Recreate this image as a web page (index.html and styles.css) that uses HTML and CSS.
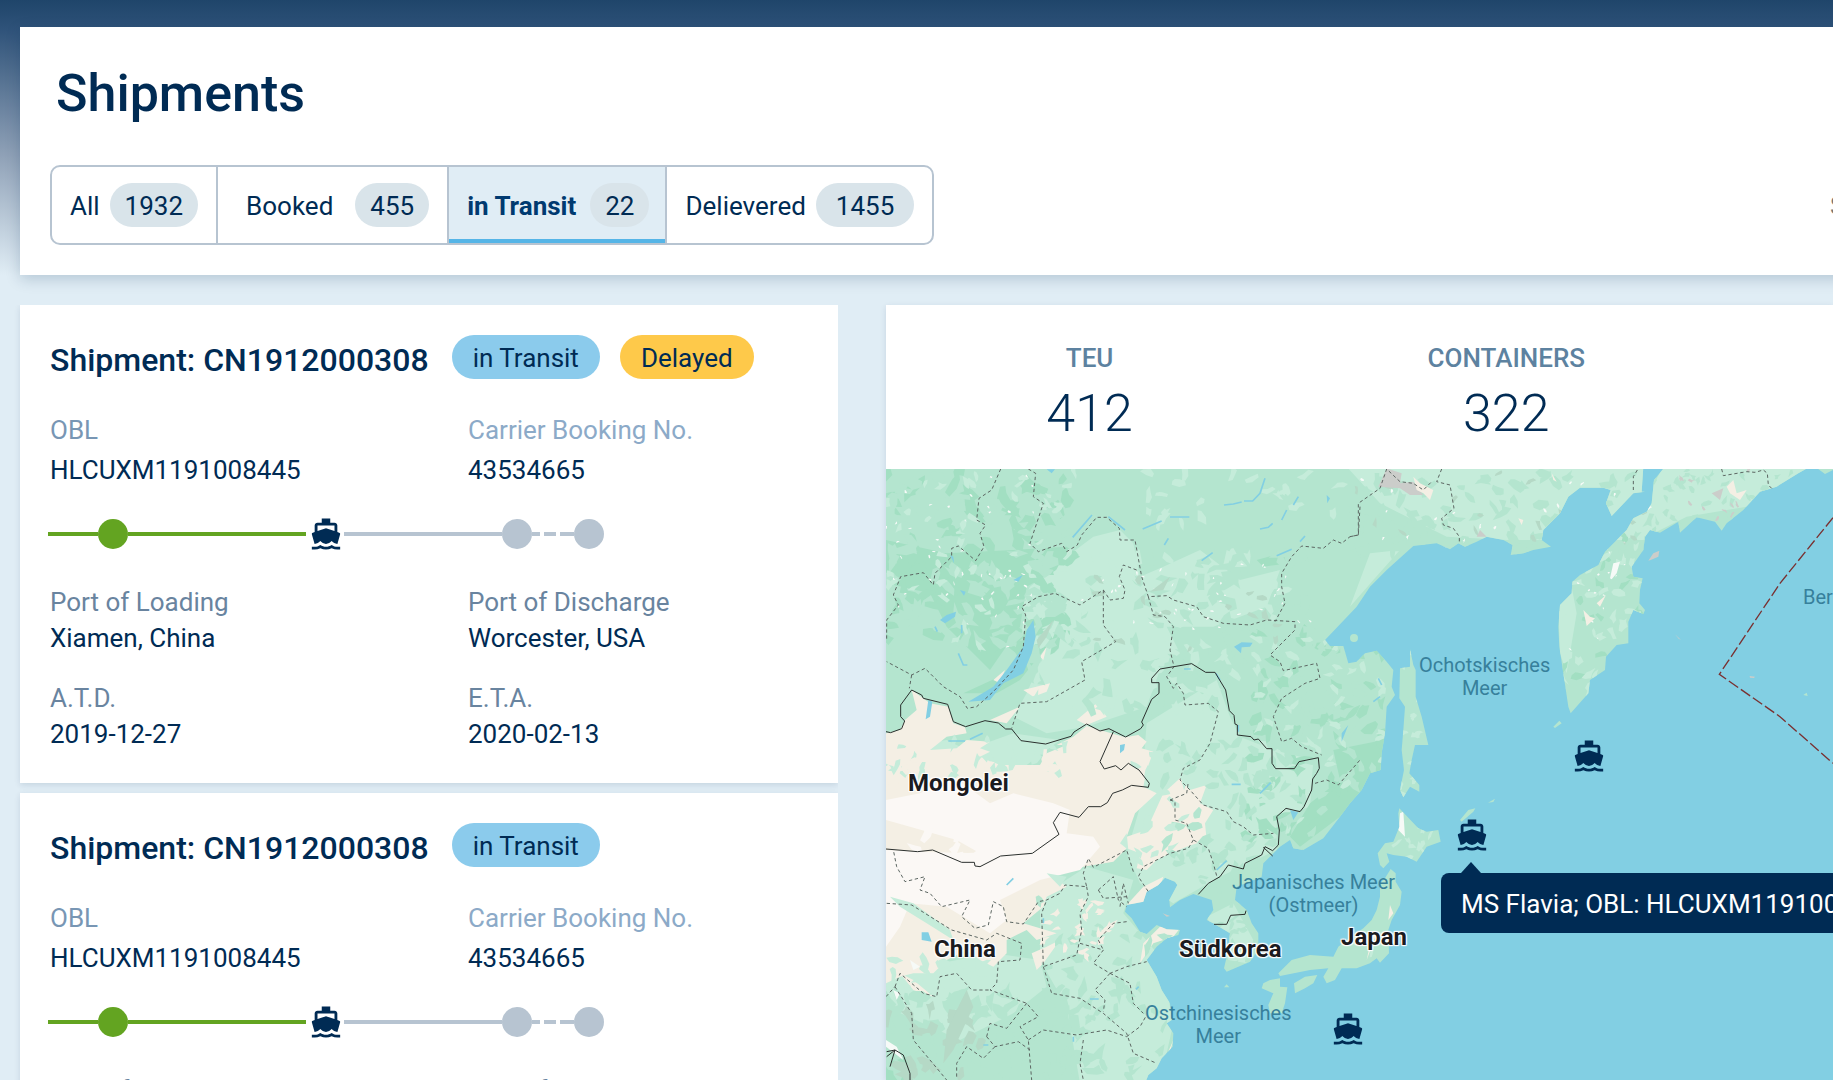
FILE: index.html
```html
<!DOCTYPE html>
<html lang="en">
<head>
<meta charset="utf-8">
<title>Shipments</title>
<link rel="stylesheet" href="styles.css">
</head>
<body>
<svg class="sprite" aria-hidden="true">
  <symbol id="ship" viewBox="0 0 24 24"><path d="M20 21c-1.39 0-2.78-.47-4-1.32-2.44 1.71-5.56 1.71-8 0C6.78 20.53 5.39 21 4 21H2v2h2c1.38 0 2.74-.35 4-.99 2.52 1.29 5.48 1.29 8 0 1.26.65 2.62.99 4 .99h2v-2h-2zM3.95 19H4c1.6 0 3.02-.88 4-2 .98 1.12 2.4 2 4 2s3.02-.88 4-2c.98 1.12 2.4 2 4 2h.05l1.89-6.68c.08-.26.06-.54-.06-.78s-.34-.42-.6-.5L20 10.62V6c0-1.1-.9-2-2-2h-3V1H9v3H6c-1.1 0-2 .9-2 2v4.62l-1.29.42c-.26.08-.48.26-.6.5s-.15.52-.06.78L3.95 19zM6 6h12v3.97L12 8 6 9.97V6z"/></symbol>
</svg>

<header class="masthead">
  <h1 class="masthead__title">Shipments</h1>
  <div class="masthead__bar">
    <nav class="tabs" aria-label="Shipment status">
      <button class="tab" type="button">All <span class="count">1932</span></button>
      <button class="tab tab--roomy" type="button">Booked <span class="count">455</span></button>
      <button class="tab tab--active" type="button" aria-pressed="true">in Transit <span class="count">22</span></button>
      <button class="tab" type="button">Delievered <span class="count count--wide">1455</span></button>
    </nav>
    <input class="search" type="search" placeholder="Search" aria-label="Search">
  </div>
</header>

<main class="board">
  <section class="list" aria-label="Shipments">
    <article class="card">
      <div class="card__head">
        <h2 class="card__title">Shipment: CN1912000308</h2>
        <span class="badge badge--transit">in Transit</span>
        <span class="badge badge--delayed">Delayed</span>
      </div>
      <dl class="facts facts--refs">
        <div><dt>OBL</dt><dd>HLCUXM1191008445</dd></div>
        <div><dt class="pale">Carrier Booking No.</dt><dd>43534665</dd></div>
      </dl>
      <div class="route">
        <span class="leg leg--first leg--done"></span><span class="stop stop--done"></span><span class="leg leg--sailed leg--done"></span>
        <svg class="ship route__ship" aria-hidden="true"><use href="#ship"/></svg>
        <span class="leg leg--ahead"></span><span class="stop"></span><span class="leg leg--inland"></span><span class="stop"></span>
      </div>
      <dl class="facts facts--ports">
        <div><dt>Port of Loading</dt><dd>Xiamen, China</dd></div>
        <div><dt>Port of Discharge</dt><dd>Worcester, USA</dd></div>
        <div><dt>A.T.D.</dt><dd>2019-12-27</dd></div>
        <div><dt>E.T.A.</dt><dd>2020-02-13</dd></div>
      </dl>
    </article>
    <article class="card">
      <div class="card__head">
        <h2 class="card__title">Shipment: CN1912000308</h2>
        <span class="badge badge--transit">in Transit</span>
      </div>
      <dl class="facts facts--refs">
        <div><dt>OBL</dt><dd>HLCUXM1191008445</dd></div>
        <div><dt class="pale">Carrier Booking No.</dt><dd>43534665</dd></div>
      </dl>
      <div class="route">
        <span class="leg leg--first leg--done"></span><span class="stop stop--done"></span><span class="leg leg--sailed leg--done"></span>
        <svg class="ship route__ship" aria-hidden="true"><use href="#ship"/></svg>
        <span class="leg leg--ahead"></span><span class="stop"></span><span class="leg leg--inland"></span><span class="stop"></span>
      </div>
      <dl class="facts facts--ports">
        <div><dt>Port of Loading</dt><dd>Xiamen, China</dd></div>
        <div><dt>Port of Discharge</dt><dd>Worcester, USA</dd></div>
        <div><dt>A.T.D.</dt><dd>2019-12-27</dd></div>
        <div><dt>E.T.A.</dt><dd>2020-02-13</dd></div>
      </dl>
    </article>
  </section>

  <section class="overview" aria-label="Fleet overview">
    <dl class="totals">
      <div><dt>TEU</dt><dd>412</dd></div>
      <div><dt>CONTAINERS</dt><dd>322</dd></div>
    </dl>
    <div class="map">
      <svg class="map__chart" viewBox="18 87 2841 1833" preserveAspectRatio="xMinYMin slice" aria-hidden="true">
        <defs>
          <g id="land">
            <path id="asia" d="M10 80H2290L2285 155 2295 155 2260 160 2195 228 2178 190 2192 150 2170 143 2100 143 2065 170 2040 220 1990 270 1985 300 2013 320 1960 330 1930 340 1892 345 1898 315 1870 300 1820 290 1790 305 1755 320 1735 310 1710 328 1670 310 1600 318 1570 345 1520 390 1470 440 1430 500 1335 600 1350 618 1390 618 1405 670 1430 665 1455 640 1490 632 1520 665 1540 690 1535 740 1545 765 1520 800 1515 880 1505 940 1502 990 1470 1000 1445 1050 1410 1090 1380 1130 1330 1195 1270 1230 1240 1225 1230 1200 1200 1220 1150 1270 1145 1310 1070 1340 1065 1380 1100 1410 1115 1450 1135 1480 1135 1530 1110 1565 1040 1595 1032 1585 1045 1530 1050 1480 1000 1450 980 1440 1000 1410 995 1380 940 1362 900 1380 870 1402 868 1380 892 1335 885 1325 855 1313 835 1335 800 1355 790 1385 740 1395 735 1415 755 1435 780 1475 800 1482 830 1455 860 1468 900 1470 895 1485 860 1495 830 1520 800 1560 830 1610 845 1650 870 1690 875 1740 860 1750 880 1780 878 1820 845 1855 830 1885 805 1905 795 1930H10Z"/>
            <path d="M2355 80H2790L2755 100 2690 140 2640 155 2590 210 2540 250 2525 272 2505 245 2450 232 2400 278 2395 245 2340 278 2310 270 2295 290 2290 330 2255 380 2260 410 2288 415 2280 450 2278 490 2295 510 2290 522 2260 510 2245 545 2245 610 2210 615 2178 650 2175 690 2130 720 2125 760 2072 820 2065 800 2050 700 2038 620 2035 560 2040 495 2075 460 2077 425 2100 405 2155 375 2175 335 2240 270 2260 235 2300 215 2315 190 2322 120Z"/>
            <path d="M1590 627 1600 675 1607 690 1607 770 1625 830 1645 915 1605 915 1595 960 1588 1000 1618 1035 1618 1055 1590 1040 1570 1072 1560 1050 1572 990 1565 930 1570 870 1575 800 1558 775 1560 685 1590 680Z"/>
            <path d="M1558 1105 1615 1165 1640 1175 1675 1170 1682 1205 1640 1220 1610 1265 1580 1250 1540 1245 1520 1240 1528 1265 1510 1285 1500 1275 1493 1240 1515 1210 1540 1205 1558 1160 1555 1120Z"/>
            <path d="M1532 1287 1547 1300 1547 1325 1565 1355 1560 1395 1535 1440 1525 1470 1527 1540 1500 1568 1490 1555 1470 1570 1430 1585 1385 1585 1365 1620 1340 1630 1330 1610 1345 1585 1290 1590 1200 1608 1195 1600 1235 1560 1290 1545 1360 1550 1375 1520 1400 1500 1450 1465 1475 1440 1490 1410 1500 1370 1500 1330 1515 1315Z"/>
            <path d="M1312 1605 1300 1630 1275 1645 1245 1660 1242 1630 1275 1610ZM1170 1620 1200 1615 1200 1640 1222 1642 1215 1690 1205 1720 1170 1720 1165 1695 1180 1660 1145 1645 1150 1630ZM1040 1633 1048 1642 1032 1642ZM1740 1140 1765 1110 1786 1105 1780 1115 1745 1145ZM1824 1088 1845 1076 1840 1086ZM2020 860 2038 842 2045 850 2025 864ZM2770 765 2780 758 2783 768ZM1410 594a12 12 0 1 0 24 0a12 12 0 1 0-24 0ZM2805 80H2859V90L2835 102Z"/>
          </g>
          <clipPath id="coast"><use href="#asia"/><path d="M2355 80H2790L2755 100 2690 140 2640 155 2590 210 2540 250 2525 272 2505 245 2450 232 2400 278 2395 245 2340 278 2310 270 2295 290 2290 330 2255 380 2260 410 2288 415 2280 450 2278 490 2295 510 2290 522 2260 510 2245 545 2245 610 2210 615 2178 650 2175 690 2130 720 2125 760 2072 820 2065 800 2050 700 2038 620 2035 560 2040 495 2075 460 2077 425 2100 405 2155 375 2175 335 2240 270 2260 235 2300 215 2315 190 2322 120ZM1590 627 1600 675 1607 690 1607 770 1625 830 1645 915 1605 915 1595 960 1588 1000 1618 1035 1618 1055 1590 1040 1570 1072 1560 1050 1572 990 1565 930 1570 870 1575 800 1558 775 1560 685 1590 680ZM1558 1105 1615 1165 1640 1175 1675 1170 1682 1205 1640 1220 1610 1265 1580 1250 1540 1245 1520 1240 1515 1210 1540 1205 1558 1160ZM1532 1287 1547 1300 1547 1325 1565 1355 1560 1395 1535 1440 1525 1470 1527 1540 1500 1568 1470 1570 1430 1585 1400 1500 1450 1465 1475 1440 1490 1410 1500 1370Z"/></clipPath>
        </defs>
        <path class="sea" d="M0 0H6000V4000H0Z"/>
        <use class="land" href="#land"/>
        <g clip-path="url(#coast)">
          <path class="meadow" d="M420 500 450 440 560 350 640 290 720 270 760 310 780 410 850 380 960 330 1080 420 1200 390 1160 500 1000 560 860 560 900 640 840 690 800 800 620 860 500 880 400 830 440 760 500 620Z"/>
          <path class="meadow" d="M1400 80H2300V300L1880 300 1700 290 1500 190ZM1470 340 1560 330 1480 420 1410 500ZM2350 80H2800L2600 200 2420 230 2300 290 2250 260ZM2035 500 2075 440 2090 520 2060 700 2040 640Z"/>
          <path class="meadow" d="M800 850 1010 720 1050 830 1080 890 1180 930 1300 960 1290 1100 1190 1130 1190 1230 1020 1310 880 1390 780 1330 740 1240 780 1100Z"/>
          <path class="meadow" d="M480 1370 620 1280 760 1320 730 1420 790 1490 840 1550 880 1750 840 1930H600L560 1700 480 1560ZM18 1600 340 1540 480 1560 500 1640 400 1720 240 1800 18 1700ZM980 1430 1060 1390 1120 1500 1100 1570 1045 1560ZM18 960 60 920 200 900 260 930 400 880 540 900 420 990 280 980 150 1010 40 980Z"/>
          <path class="forest" d="M18 300 200 340 400 330 560 320 600 350 440 440 420 560 330 690 200 560 150 460 18 430ZM1130 360 1240 330 1230 370 1150 380ZM1360 930 1510 900 1500 1000 1380 1130 1260 1220 1230 1190 1290 1090 1380 1020ZM250 760 380 700 430 620 480 540 500 620 420 720 350 760ZM18 1870 80 1850 100 1930H18Z"/>
          <path class="steppe" d="M18 880 60 870 75 840 110 810 95 750 150 790 205 800 220 850 255 862 260 880 200 890 150 930 230 925 260 900 330 905 300 925 330 935 300 950 360 975 480 975 500 940 560 915 530 915 580 890 620 858 660 870 735 892 775 885 800 905 785 925 820 935 800 990 790 1040 830 1060 765 1120 740 1190 800 1170 850 1060 900 1015 930 1050 980 1035 960 1090 1000 1110 975 1150 980 1200 920 1220 860 1245 830 1260 800 1290 770 1285 780 1240 740 1225 700 1265 610 1280 520 1310 560 1340 500 1370 490 1400 430 1450 530 1480 470 1500 440 1470 380 1500 380 1540 340 1580 300 1560 260 1530 200 1560 160 1600 100 1600 60 1610 18 1630ZM790 1340 850 1310 840 1340 800 1370 790 1390 740 1395Z"/>
          <path class="desert" d="M18 1080 120 1060 220 1010 330 1090 400 1060 520 1090 570 1110 560 1180 640 1190 660 1220 600 1290 480 1320 360 1380 380 1440 330 1480 200 1400 90 1390 60 1460 18 1520V1230L110 1235 300 1240 230 1200 90 1160 18 1140Z"/>
          <path class="steppe" d="M430 750 510 730 500 755 460 770ZM330 840 420 800 380 850ZM590 840 650 790 680 830 620 855ZM480 650 500 620 490 660ZM340 720 375 690 360 730ZM60 1600 100 1620 160 1670 100 1650ZM840 1460 900 1465 880 1490 820 1510 780 1570 790 1510ZM850 1870 880 1800 860 1870ZM455 1540 500 1520 540 1500 490 1570 470 1590Z"/>
          <path class="meadow" d="M30 1370 100 1390 210 1470 220 1500 140 1450 60 1400ZM500 1300 560 1310 540 1340ZM720 1210 740 1180 745 1230ZM600 1000 640 960 600 1000ZM1040 330 1060 340 1020 420Z"/>
          <g id="relief"></g>
          <path class="rock" d="M1495 140 1520 85 1565 100 1560 130 1600 125 1630 165 1590 165 1560 145ZM2495 160 2530 145 2520 180ZM1800 270 1820 290 1790 290Z"/>
          <path class="shade" d="M260 1650 280 1700 220 1830 190 1870 200 1770ZM470 600 520 540 500 590 475 625ZM810 455 870 410 850 450Z"/>
          <path class="steppe" d="M1600 110 1620 130 1660 150 1650 180 1630 160 1610 150ZM2540 140 2560 120 2570 160 2600 150 2580 180 2550 160ZM2150 490 2178 465 2160 500ZM2110 510 2130 530 2145 535 2120 558ZM2015 100 2030 125 2020 120ZM1915 235 1930 240 1925 255ZM1460 1560 1490 1480 1475 1490ZM1530 1395 1540 1420 1525 1440ZM1330 1580 1350 1570 1345 1600ZM1378 1550 1395 1560 1385 1580Z"/>
          <path class="snow" d="M2190 415 2200 370 2220 365 2210 400 2195 418ZM1560 1120 1570 1115 1575 1190 1555 1170ZM18 1800 50 1820 70 1860 18 1820ZM40 1650 60 1660 50 1680ZM90 1560 120 1580 100 1590Z"/>
          <path class="sea" d="M460 540 467 590 455 640 430 700 370 730 330 780 265 785 340 740 380 690 430 620 440 570ZM145 780 157 785 150 830 137 838ZM200 525 228 515 225 530 195 550 180 540ZM240 450 257 455 252 467ZM400 420 428 405 415 425ZM1062 620 1085 607 1118 608 1110 620 1085 622 1083 640ZM1340 165 1350 175 1342 190ZM720 915 735 912 732 930 720 940ZM1230 1110 1255 1117 1240 1140ZM125 1477 145 1477 155 1505 125 1500ZM210 345 220 350 222 370ZM1385 880 1405 855 1385 905ZM500 88 525 88 515 100Z"/>
          <path class="river" d="M578 292 636 225M685 230 735 270M870 231H928M1032 195 1060 192 1085 186M1092 183H1118L1140 160 1155 115M1255 170 1240 195M1220 210 1205 240M1140 267 1165 262 1178 250M1190 347 1235 328M1275 288 1260 305M788 267 845 243M865 295 853 315M965 362 998 338M205 903H255M270 898 308 880M245 555V580M235 640 250 675H262M380 1335 400 1315M1140 1060 1172 1028M1055 1033H1082M1010 1290 1040 1262M630 1677H656M490 1435V1450M165 560 172 575M1008 700 1020 720M1075 855V875M1480 785 1500 770M1495 715 1505 735M310 1815H325M580 1790V1805M768 1648 776 1640M912 687H932"/>
        </g>
        <path class="rock" d="M2305 362 2320 340 2338 332 2335 350 2312 360ZM2385 583 2403 600 2396 596ZM2609 708 2625 710 2622 714 2610 713ZM848 1420 870 1428 860 1430Z"/>
        <g class="province">
          <path d="M362 87 335 150 297 175 290 240 317 255 300 280 312 320 287 362 235 318 215 325V350L165 400 160 435 130 398 62 410 40 465 55 495 20 540V600"/>
          <path d="M445 87 467 100 460 170 490 190 450 310 475 335 545 310 560 335 592 315 605 285 650 232 680 232 718 265 720 300 765 300 785 410 805 470 860 467 880 480 950 500 970 530 1030 550 1110 555 1160 540 1245 545 1245 570 1170 645 1200 665 1210 692 1310 670 1320 715 1275 730 1205 775 1180 830 1205 905 1235 895 1265 920 1325 945"/>
          <path d="M805 470 820 525 855 530 880 560 870 630 882 680 860 710 880 745 890 730 910 760 915 795 985 790 1015 815 990 910 960 960 910 985 900 1020 930 1050 970 1095 1040 1115 1060 1145 1090 1160 1120 1185 1180 1180"/>
          <path d="M770 390 730 375 718 410 735 450 730 475 690 480 670 450 600 495 525 460 475 470 425 500 437 525 430 620 400 690 340 755 290 800 262 805 240 770 190 740 135 685 95 705 20 665M95 705 88 745M670 450V555L707 605 605 665 615 720 500 785 420 790 395 865"/>
          <path d="M1440 200 1435 285 1410 290 1385 310 1360 300 1330 325 1265 318 1235 350 1205 400 1205 440 1215 490 1185 545M1410 290 1435 285V190L1500 145 1520 87 1560 125 1600 130 1630 150 1655 125M1685 87 1670 125 1710 135 1722 205 1685 235 1690 255 1720 265 1738 290V310M2272 90 2260 110V150M2525 87 2530 107 2600 95 2625 97 2650 90 2662 100 2665 135 2675 145"/>
          <path d="M870 1080 885 1085V1140L920 1150 940 1200 985 1225 1000 1270 1012 1315M940 1200 925 1225 870 1240 790 1280 775 1310 805 1355M870 1080 920 1060 925 1025M1305 1030 1340 1020 1375 1035 1440 960M760 1295 740 1230 640 1282 625 1255 610 1300 620 1340 555 1335 540 1360 500 1380 475 1385 430 1452 380 1445 370 1400 340 1385 325 1455 285 1465 245 1430 270 1380 185 1400 150 1360 120 1350 135 1310 75 1325 50 1280 40 1230"/>
          <path d="M20 1390 95 1395 215 1470 320 1500 350 1480 425 1510 420 1560 355 1565 350 1630 330 1650 440 1690 475 1730 420 1760 445 1800 455 1920M620 1340 625 1370 600 1420 605 1470 590 1545 490 1580 485 1420 500 1380M490 1580 515 1660 600 1675 670 1720 740 1780 760 1840 830 1870M600 1510 670 1530 640 1570 690 1600 740 1580 800 1565M740 1445 700 1450 655 1500 670 1530M690 1600 645 1650 675 1680 670 1715M690 1600 750 1630 760 1690 790 1720"/>
          <path d="M45 1640 60 1600 130 1660 170 1670 180 1610 230 1600 275 1650 330 1650M45 1640 95 1720 100 1800 200 1920M320 1790 330 1750 380 1765 440 1690M445 1800 490 1770 590 1785 680 1770 740 1790M740 1790 780 1760 800 1725M610 1800 600 1870 610 1920M320 1790 345 1820 415 1805 450 1830M230 1910 230 1870 260 1820 310 1855 345 1820M18 1670 45 1640M655 1350 700 1310 715 1380 740 1400M720 1400 730 1330 745 1390M655 1350 670 1375 740 1370"/>
        </g>
        <g class="border">
          <path d="M18 875 32 878 65 866 74 843 62 830V795L95 750 125 765 130 775 203 793 220 845 257 860 315 842 355 849 377 867H395L423 902 497 912 573 889 582 876 620 852 660 873 687 866 737 891 782 866 790 855 785 846 815 778 837 760V728H815V715L840 687 935 671 977 697H1005L1037 750 1048 812 1062 826 1065 852 1072 855V885L1113 890 1122 900 1135 897 1160 926H1176V970L1187 986H1243L1257 965 1315 953 1318 985 1310 1000 1298 1017 1295 1050 1272 1100 1260 1115 1218 1105 1190 1130 1198 1170 1195 1215 1178 1232 1155 1220 1145 1245 1095 1270 1090 1287 1045 1275 1020 1310 985 1330 955 1363"/>
          <path d="M700 875 660 965 673 987 707 977 723 990 745 970 777 990 808 1030 805 1042 755 1036 727 1050 698 1060 682 1088 662 1100H625L597 1132 540 1117 520 1148 537 1183 457 1240 362 1248 300 1280 285 1278 283 1267H245L158 1230 113 1235 18 1227"/>
          <path d="M1002 1453H1040L1052 1426 1095 1423 1098 1412M1150 1222 1178 1248M20 1835 45 1830 70 1845 90 1900V1920M20 1850 45 1830 30 1880"/>
        </g>
        <path class="dateline" d="M2859 233 2700 430 2518 703 2700 830 2859 970"/>
      </svg>
      <span class="place place--sea ochotsk">Ochotskisches<br>Meer</span>
      <span class="place place--sea bering">Beringmeer</span>
      <span class="place place--sea japansea">Japanisches Meer<br>(Ostmeer)</span>
      <span class="place place--sea eastsea">Ostchinesisches<br>Meer</span>
      <span class="place mongolia">Mongolei</span>
      <span class="place china">China</span>
      <span class="place korea">Südkorea</span>
      <span class="place japan">Japan</span>
      <svg class="ship pin pin--north" aria-hidden="true"><use href="#ship"/></svg>
      <svg class="ship pin pin--flavia" aria-hidden="true"><use href="#ship"/></svg>
      <svg class="ship pin pin--south" aria-hidden="true"><use href="#ship"/></svg>
      <div class="tooltip" role="tooltip">MS Flavia; OBL: HLCUXM1191008445</div>
    </div>
  </section>
</main>
<script src="relief.js"></script>
</body>
</html>
```
FILE: styles.css
```css
* { box-sizing: border-box; }

:root {
  --navy: #002b54;
  --sky: #e0edf5;
  --line: #b7c4d1;
  --green: #63a421;
  --gutter: 20px;
}

body {
  margin: 0;
  height: 100vh;
  overflow: hidden;
  display: flex;
  flex-direction: column;
  padding-top: 27px;
  background: linear-gradient(#1f456a 0, #2e5279 28px, #8fa1b7 155px, var(--sky) 275px) no-repeat var(--sky);
  color: var(--navy);
  font: 26px/36px Roboto, "Liberation Sans", sans-serif;
}

h1, h2, dl, dd { margin: 0; }

.sprite { position: absolute; width: 0; height: 0; }
.ship { width: 34px; height: 34px; fill: var(--navy); }

/* Header */
.masthead {
  flex: none;
  margin: 0 -20px 0 var(--gutter);
  padding: 37px 20px 30px 30px;
  background: #fff;
  box-shadow: 0 4px 14px rgba(0, 43, 84, .2);
}
.masthead__title { padding-left: 6px; font-size: 52px; font-weight: 500; line-height: 60px; }
.masthead__bar { display: flex; align-items: center; justify-content: space-between; margin-top: 41px; }

.tabs { display: flex; height: 80px; border: 2px solid var(--line); border-radius: 10px; overflow: hidden; }
.tab {
  display: flex;
  align-items: baseline;
  gap: 10px;
  padding: 16px 18px 0;
  border: 0;
  background: none;
  color: inherit;
  font: inherit;
}
.tab + .tab { border-left: 2px solid var(--line); }
.tab--roomy { gap: 22px; padding-left: 28px; }
.tab--active { gap: 14px; padding-right: 16px; background: var(--sky); box-shadow: inset 0 -4px #55b5e7; color: #003a70; font-weight: 700; }
.count {
  padding: 2px 15px 0;
  border-radius: 22px;
  background: #d9e4ea;
  color: var(--navy);
  font-weight: 400;
  line-height: 42px;
}
.count--wide { padding: 2px 20px 0; }

.search {
  flex: none;
  width: 200px;
  margin-right: -197px;
  padding: 2px 0 0;
  border: 0;
  background: none;
  color: #5d82a0;
  font: inherit;
}

/* Two columns below the header */
.board {
  flex: 1;
  min-height: 0;
  display: grid;
  grid-template-columns: 838fr 995fr;
  margin-top: 30px;
}

.list {
  display: flex;
  flex-direction: column;
  gap: 10px;
  padding-left: var(--gutter);
  overflow-y: auto;
  scrollbar-width: none;
}
.card {
  flex: none;
  padding: 30px 30px 31px;
  background: #fff;
  box-shadow: 0 2px 6px rgba(0, 43, 84, .12);
}
.card__head { display: flex; align-items: flex-start; height: 44px; gap: 20px; }
.card__title { padding-right: 3px; font-size: 32px; font-weight: 500; line-height: 50px; white-space: nowrap; }
.badge { padding: 2px 21px 0; border-radius: 22px; line-height: 42px; white-space: nowrap; }
.badge--transit { background: #8bcbec; }
.badge--delayed { background: #fec94a; }

.facts { display: grid; grid-template-columns: 418px 1fr; row-gap: 24px; }
.facts dt { color: #69849f; }
.facts--refs { margin-top: 31px; line-height: 40px; }
.facts--refs dt { color: #7896b4; }
.facts--refs .pale { color: #8caac8; }
.facts--ports { margin-top: 33px; }

.route { display: flex; align-items: center; margin: 27px 0 0 -2px; }
.route__ship { flex: none; margin: 0 1px 0 3px; }
.leg { flex: none; height: 4px; background: var(--line); }
.leg--first { width: 50px; }
.leg--sailed { width: 178px; }
.leg--ahead { width: 158px; }
.leg--inland { width: 42px; background: repeating-linear-gradient(90deg, var(--line) 0 12px, #fff 12px 16px); background-position-x: -4px; }
.leg--done { background: var(--green); }
.stop { flex: none; width: 30px; height: 30px; border-radius: 50%; background: var(--line); }
.stop--done { background: var(--green); }

/* Totals and map */
.overview {
  display: flex;
  flex-direction: column;
  min-width: 0;
  min-height: 0;
  margin-left: 48px;
  background: #fff;
  box-shadow: 0 2px 6px rgba(0, 43, 84, .12);
}
.totals {
  flex: none;
  display: grid;
  grid-template-columns: 43% 45%;
  padding: 35px 0 25px;
  text-align: center;
}
.totals dt { color: #5d82a0; font-weight: 500; }
.totals dd { margin-top: 8px; font-size: 52px; font-weight: 300; line-height: 60px; }

.map { position: relative; flex: 1; min-height: 0; overflow: hidden; }
.map__chart { display: block; width: 100%; height: 100%; }
.sea { fill: #82cfe3; }
.land { fill: #b4e5cf; }
.meadow { fill: #c5ecda; }
.forest { fill: #a2dfc2; }
.steppe { fill: #f4efe4; }
.desert { fill: #fbf8f5; }
.rock { fill: #cbcdca; }
.snow { fill: #f6faf7; }
.shade { fill: #b5d9c6; }
.river { fill: none; stroke: #82cfe3; stroke-width: 5; }
.province { fill: none; stroke: #5c6662; stroke-width: 3; stroke-dasharray: 10 8; }
.border { fill: none; stroke: #2b302e; stroke-width: 3; }
.dateline { fill: none; stroke: #7a3030; stroke-width: 4; stroke-dasharray: 34 10; }

.place {
  position: absolute;
  color: #1b1b1f;
  font-size: 24px;
  font-weight: 700;
  line-height: 28px;
  white-space: nowrap;
  text-shadow: 0 0 2px #fff, 1px 1px 1px #fff, -1px -1px 1px #fff, 1px -1px 1px #fff, -1px 1px 1px #fff;
}
.place--sea { color: #37809b; font-size: 20px; font-weight: 400; line-height: 23px; text-align: center; text-shadow: none; }
.ochotsk { left: 533px; top: 185px; }
.bering { left: 917px; top: 117px; }
.japansea { left: 346px; top: 402px; }
.eastsea { left: 259px; top: 533px; }
.mongolia { left: 22px; top: 300px; }
.china { left: 48px; top: 466px; }
.korea { left: 293px; top: 466px; }
.japan { left: 455px; top: 454px; }

.pin { position: absolute; }
.pin--north { left: 686px; top: 270px; }
.pin--flavia { left: 569px; top: 349px; }
.pin--south { left: 445px; top: 543px; }

.tooltip {
  position: absolute;
  left: 555px;
  top: 404px;
  padding: 2px 20px 0;
  border-radius: 8px;
  background: var(--navy);
  color: #fff;
  line-height: 58px;
  white-space: nowrap;
}
.tooltip::before {
  content: "";
  position: absolute;
  left: 20px;
  bottom: 100%;
  border: solid transparent;
  border-width: 0 10px 11px;
  border-bottom-color: var(--navy);
}
```
FILE: relief.js
```js
// Scatters small terrain facets over the land; a fixed seed keeps them stable between loads.
const relief = document.getElementById("relief");
let seed = 7;
const rand = () => (seed = (seed * 16807) % 2147483647) / 2147483647;

// [x, y, width, height, facets, facet size, terrain class]
const areas = [
  [18, 87, 560, 560, 90, 34, "forest"],
  [18, 87, 560, 560, 90, 34, "land"],
  [18, 87, 560, 560, 50, 20, "meadow"],
  [18, 110, 460, 520, 50, 6, "snow"],
  [560, 87, 860, 180, 24, 24, "meadow"],
  [450, 330, 850, 480, 90, 34, "land"],
  [450, 330, 850, 480, 60, 26, "meadow"],
  [600, 370, 700, 200, 40, 6, "snow"],
  [560, 380, 700, 260, 16, 20, "shade"],
  [1100, 560, 420, 640, 60, 30, "forest"],
  [1100, 560, 420, 640, 60, 26, "land"],
  [1100, 560, 420, 640, 50, 20, "meadow"],
  [1420, 100, 900, 240, 90, 28, "land"],
  [1420, 100, 900, 240, 20, 16, "shade"],
  [1420, 100, 900, 240, 24, 8, "snow"],
  [2040, 240, 260, 560, 26, 22, "forest"],
  [2040, 240, 260, 560, 40, 22, "meadow"],
  [2060, 300, 200, 360, 20, 5, "snow"],
  [2300, 90, 460, 190, 50, 16, "land"],
  [2400, 90, 260, 150, 12, 10, "rock"],
  [1540, 640, 120, 620, 40, 16, "meadow"],
  [840, 900, 420, 400, 60, 28, "land"],
  [18, 1640, 700, 280, 90, 36, "land"],
  [18, 1700, 320, 220, 20, 30, "shade"],
  [480, 1380, 380, 540, 50, 24, "land"],
  [480, 1380, 240, 180, 26, 18, "steppe"],
  [18, 900, 540, 110, 26, 24, "meadow"],
  [18, 940, 540, 120, 26, 24, "steppe"],
  [18, 1100, 560, 200, 22, 30, "desert"],
  [760, 940, 160, 340, 18, 24, "meadow"],
  [18, 1560, 360, 90, 20, 26, "meadow"],
  [1190, 1480, 340, 120, 20, 14, "meadow"],
  [950, 1300, 180, 280, 30, 16, "land"]
];

for (const [x, y, w, h, count, size, kind] of areas) {
  let d = "";
  for (let i = 0; i < count; i++) {
    const cx = x + rand() * w, cy = y + rand() * h, tilt = rand() * Math.PI;
    for (let k = 0; k < 7; k++) {
      const a = k * 0.898, r = size * (0.3 + rand());
      const u = Math.cos(a) * r, v = Math.sin(a) * r * 0.5;
      const px = cx + u * Math.cos(tilt) + v * Math.sin(tilt);
      const py = cy - u * Math.sin(tilt) + v * Math.cos(tilt);
      d += (k ? "L" : "M") + px.toFixed(0) + " " + py.toFixed(0);
    }
    d += "Z";
  }
  const facet = document.createElementNS("http://www.w3.org/2000/svg", "path");
  facet.setAttribute("class", kind);
  facet.setAttribute("d", d);
  relief.append(facet);
}
```
